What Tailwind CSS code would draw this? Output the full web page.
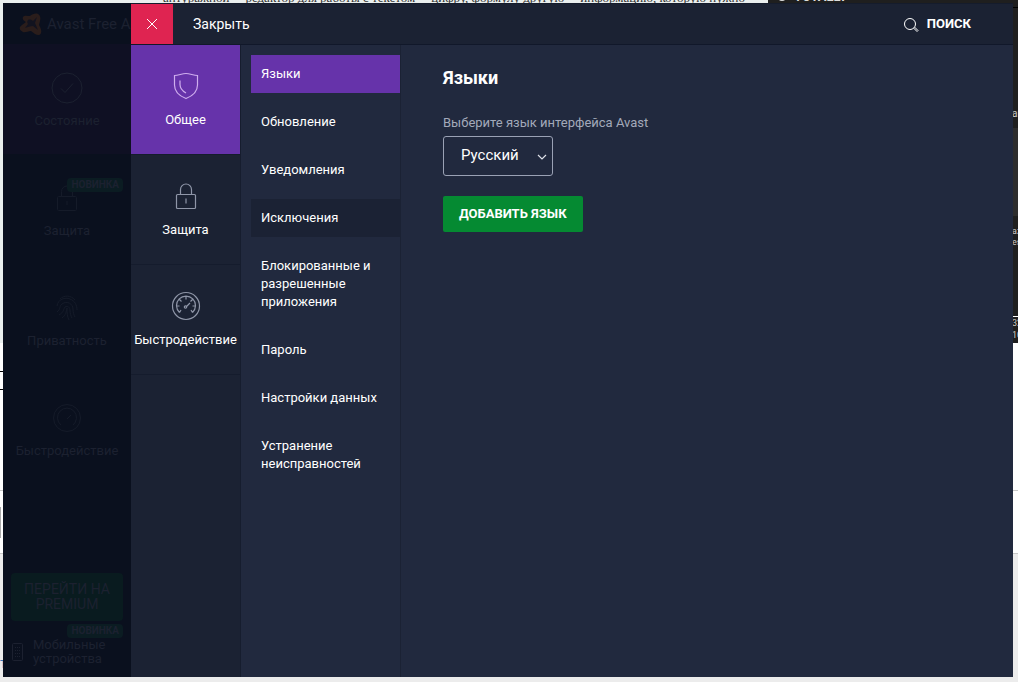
<!DOCTYPE html>
<html lang="ru">
<head>
    <meta charset="UTF-8">
    <meta name="viewport" content="width=device-width, initial-scale=1.0">
    <title>Avast Free Antivirus | Настройки</title>
    <script src="https://cdn.jsdelivr.net/npm/@tailwindcss/browser@4"></script>
</head>
<body class="relative flex min-h-screen overflow-hidden bg-[#ececec] pt-[3px] pr-[5px] pb-[5px] pl-[3px] font-['Roboto','Open_Sans',sans-serif] text-[13px] leading-5 text-white">

    <!-- desktop behind the window -->
    <div class="absolute inset-0 flex flex-col overflow-hidden" aria-hidden="true">
        <div class="flex h-[343px] shrink-0">
            <div class="h-full w-[768px] bg-[#eaefee] font-['Liberation_Serif',serif] text-[13px] text-[#333]">
                <div class="absolute -top-[10px] left-[163px] flex gap-4 leading-[16px] whitespace-nowrap">
                    <span>антуражной</span>
                    <span>редактор для работы с текстом</span>
                    <span>цифру, формулу другую</span>
                    <span>информацию, которую нужно</span>
                </div>
            </div>
            <div class="relative flex h-full grow flex-col justify-end bg-[#1f1f1f]">
                <div class="absolute -top-[13px] left-[10px] flex items-center gap-2 text-[13px] font-bold text-[#ddd]">
                    <span class="size-2 rounded-full bg-[#ddd]"></span>TOTALLY
                </div>
                <div class="absolute top-[7px] right-0 h-px w-[6px] bg-black"></div>
                <div class="absolute top-[104px] right-0 w-[6px] overflow-hidden text-[10px] text-[#ccc]">an</div>
                <div class="absolute top-[128px] right-0 h-[88px] w-[6px] bg-[#2d2d2d]"></div>
                <div class="absolute top-[226px] right-0 w-[6px] overflow-hidden text-[9px] leading-[11px] text-[#ccc]">az<br>es</div>
                <div class="absolute top-[316px] right-0 w-[6px] overflow-hidden border-t border-white text-[9px] leading-[12px] text-[#ccc]">32<br>10</div>
            </div>
        </div>
        <div class="h-[148px] shrink-0 border-b border-[#c8c8c8] bg-white">
            <div class="mt-[28px] h-px w-[3px] bg-black"></div>
            <div class="mt-[17px] h-px w-[3px] bg-black"></div>
        </div>
        <div class="flex h-[63px] shrink-0 items-center border-b border-[#c8c8c8] bg-white">
            <div class="h-[31px] w-px bg-[#aaa]"></div>
        </div>
        <div class="grow bg-[#ececec] pt-[100px] text-[14px] leading-[18px] text-[#3a78b8]">т</div>
    </div>

    <div class="relative flex grow bg-[#21293e]">

        <!-- dimmed main menu -->
        <aside class="flex w-[128px] shrink-0 flex-col overflow-hidden bg-[#0a101e] text-[#1c2130]">
            <div class="flex h-[41px] shrink-0 items-center gap-1 pl-4 text-[15px] whitespace-nowrap">
                <svg class="size-6 shrink-0" viewBox="0 0 24 24">
                    <path fill="#2a1d1b" d="M11 4c2-2 6-3 8-2s3 4 2 7l-1 4c1 2 3 5 2 8s-4 2-6 1l-4-3c-3 0-6 2-8 1s-4-3-3-5 4-3 6-5c-2-1-4-3-3-5s5-1 7-1z"/>
                    <path fill="#12131f" d="M9 8c2-1 4 0 5 1l4-4-2 6c1 2 2 5 3 7l-5-4c-3 0-5 1-8 2l3-4c-1-1-1-3 0-4z"/>
                </svg>
                <span>Avast Free Antivirus</span>
            </div>
            <div class="flex h-[110px] shrink-0 flex-col items-center gap-[7px] bg-[#0f1023] pt-[28px]">
                <svg class="size-8" viewBox="0 0 32 32" fill="none" stroke="currentColor">
                    <circle cx="16" cy="16" r="15"/>
                    <path d="M10 16.5l4 4 8-9"/>
                </svg>
                <span>Состояние</span>
            </div>
            <div class="relative flex h-[110px] shrink-0 flex-col items-center gap-[7px] pt-[28px]">
                <span class="absolute top-6 right-2 rounded bg-[#0b1c22] px-1 text-[10px] leading-[14px] font-bold">НОВИНКА</span>
                <svg class="size-8" viewBox="0 0 32 32" fill="none" stroke="#151b29">
                    <rect x="6.5" y="14.5" width="19" height="14" rx="1"/>
                    <path d="M10.500 14.500v-5a5.500 5.500 0 0 1 11 0v5M16 19v4"/>
                </svg>
                <span>Защита</span>
            </div>
            <div class="flex h-[110px] shrink-0 flex-col items-center gap-[7px] pt-[28px]">
                <svg class="size-8" viewBox="0 0 32 32" fill="none" stroke="#151b29">
                    <path d="M9 7c4-4 11-4 15 1M6 14c1-7 8-9 13-7 5 2 7 6 7 11M6 20c4-3 2-6 5-8 5-4 11 0 11 5 0 4 1 6 2 8M8 23c5-3 4-5 6-8 3-2 5 1 5 3 0 4 1 6 2 8M11 26c4-3 4-6 5-10 0 5 0 8 2 12"/>
                </svg>
                <span>Приватность</span>
            </div>
            <div class="flex h-[110px] shrink-0 flex-col items-center gap-[7px] pt-[28px]">
                <svg class="size-8" viewBox="0 0 32 32" fill="none" stroke="#151b29">
                    <circle cx="16" cy="16" r="13.500"/>
                    <path d="M10 23a9.500 9.500 0 1 1 12 0M16 17l4-4"/>
                </svg>
                <span>Быстродействие</span>
            </div>
            <div class="mt-auto px-2 pb-[11px]">
                <button class="w-full rounded bg-[#091b1f] py-[9px] text-center text-[14px] leading-[15px]">ПЕРЕЙТИ НА<br>PREMIUM</button>
                <div class="mt-[3px] flex justify-end">
                    <span class="rounded bg-[#0b1c22] px-1 text-[10px] leading-[14px] font-bold">НОВИНКА</span>
                </div>
                <div class="flex items-center gap-[9px]">
                    <svg class="h-5 w-[13px]" viewBox="0 0 13 20" fill="none" stroke="currentColor">
                        <rect x="1.500" y="1.500" width="10" height="17" rx="1"/>
                        <path stroke-dasharray="1 2" d="M4.500 5v11M6.500 5v11M8.500 5v11"/>
                    </svg>
                    <span class="leading-[14px]">Мобильные<br>устройства</span>
                </div>
            </div>
        </aside>

        <!-- settings -->
        <div class="flex grow flex-col border-t border-[#151c2c]">
            <header class="flex h-[41px] shrink-0 items-center border-b border-[#11182a] bg-[#1b2233]">
                <button class="flex h-full w-[42px] items-center justify-center bg-[#df2451]" aria-label="Закрыть окно">
                    <svg class="size-3" viewBox="0 0 12 12" fill="none" stroke="white">
                        <path d="M1 1l10 10M11 1L1 11"/>
                    </svg>
                </button>
                <span class="pl-5 text-[14px]">Закрыть</span>
                <button class="mr-[42px] ml-auto flex items-center gap-2 text-[13px] font-bold">
                    <svg class="mt-[2px] size-4" viewBox="0 0 16 16" fill="none" stroke="white">
                        <circle cx="7" cy="7" r="5.500"/>
                        <path d="M11 11.500l1-1 3 3-1 1z"/>
                    </svg>
                    ПОИСК
                </button>
            </header>

            <div class="flex grow">
                <nav class="flex w-[110px] shrink-0 flex-col border-r border-[#161d2e] bg-[#1b2233]">
                    <a href="#general" class="flex h-[110px] flex-col items-center gap-2 border-b border-[#151c2d] bg-[#6633aa] pt-[25px]">
                        <svg class="size-8" viewBox="0 0 32 32" fill="none" stroke="#cfaeee" stroke-width="1.200">
                            <path d="M4.500 5.500C8.500 5.500 12 3.500 16 3.500s7.500 2 11.500 2V15c0 7-5 11-11.500 13.500C9.500 26 4.500 22 4.500 15z"/>
                            <path d="M10 10.500v4c0 4 2.500 6.500 6 8.500"/>
                        </svg>
                        Общее
                    </a>
                    <a href="#protection" class="flex h-[110px] flex-col items-center gap-2 border-b border-[#151c2d] pt-[25px]">
                        <svg class="size-8" viewBox="0 0 32 32" fill="none" stroke="#8f96a8" stroke-width="1.200">
                            <rect x="6.500" y="14.500" width="19" height="14" rx="1"/>
                            <path d="M10.500 14.500v-5a5.500 5.500 0 0 1 11 0v5M16 18.500v5"/>
                        </svg>
                        Защита
                    </a>
                    <a href="#performance" class="flex h-[110px] flex-col items-center gap-2 border-b border-[#151c2d] pt-[25px]">
                        <svg class="size-8" viewBox="0 0 32 32" fill="none" stroke="#8f96a8" stroke-width="1.200">
                            <circle cx="16" cy="16" r="13.500"/>
                            <path d="M9.500 22.500a9.500 9.500 0 1 1 13 0M16 6.500v3M9.500 9.500l2 2M22.500 9.500l-2 2M6.500 16h3M22.500 16h3M9.500 22.500l1.500-2.500M22.500 22.500l-1.500-2.500M16.500 16.500l3.500-3.500"/>
                            <circle cx="15.500" cy="17" r="1.200"/>
                        </svg>
                        Быстродействие
                    </a>
                </nav>

                <nav class="flex w-[160px] shrink-0 flex-col gap-[10px] border-r border-[#1b2234] pt-[10px] pl-[10px] leading-[18px]">
                    <a href="#languages" class="bg-[#6633aa] p-[10px]">Языки</a>
                    <a href="#updates" class="p-[10px]">Обновление</a>
                    <a href="#notifications" class="p-[10px]">Уведомления</a>
                    <a href="#exceptions" class="bg-[#1b2234] p-[10px]">Исключения</a>
                    <a href="#apps" class="p-[10px]">Блокированные и разрешенные приложения</a>
                    <a href="#password" class="p-[10px]">Пароль</a>
                    <a href="#data" class="p-[10px]">Настройки данных</a>
                    <a href="#troubleshooting" class="p-[10px]">Устранение неисправностей</a>
                </nav>

                <main class="flex grow flex-col items-start pt-[23px] pl-[42px]">
                    <h1 class="text-[18px] leading-5 font-bold">Языки</h1>
                    <label for="language" class="mt-[25px] text-[#a3a9ba]">Выберите язык интерфейса Avast</label>
                    <div class="relative mt-[3px]">
                        <select id="language" class="h-10 w-[110px] appearance-none rounded-[3px] border border-[#9aa1b4] bg-[#21293e] pb-[2px] pl-[17px] text-[15px]">
                            <option>Русский</option>
                        </select>
                        <svg class="pointer-events-none absolute top-4 right-[6px] size-[10px]" viewBox="0 0 10 10" fill="none" stroke="#dde0e8" stroke-width="1.200">
                            <path d="M1 3l4 4 4-4"/>
                        </svg>
                    </div>
                    <button class="mt-5 h-9 rounded-[2px] bg-[#058a32] px-4 text-[13px] font-bold">ДОБАВИТЬ ЯЗЫК</button>
                </main>
            </div>
        </div>
    </div>
</body>
</html>
